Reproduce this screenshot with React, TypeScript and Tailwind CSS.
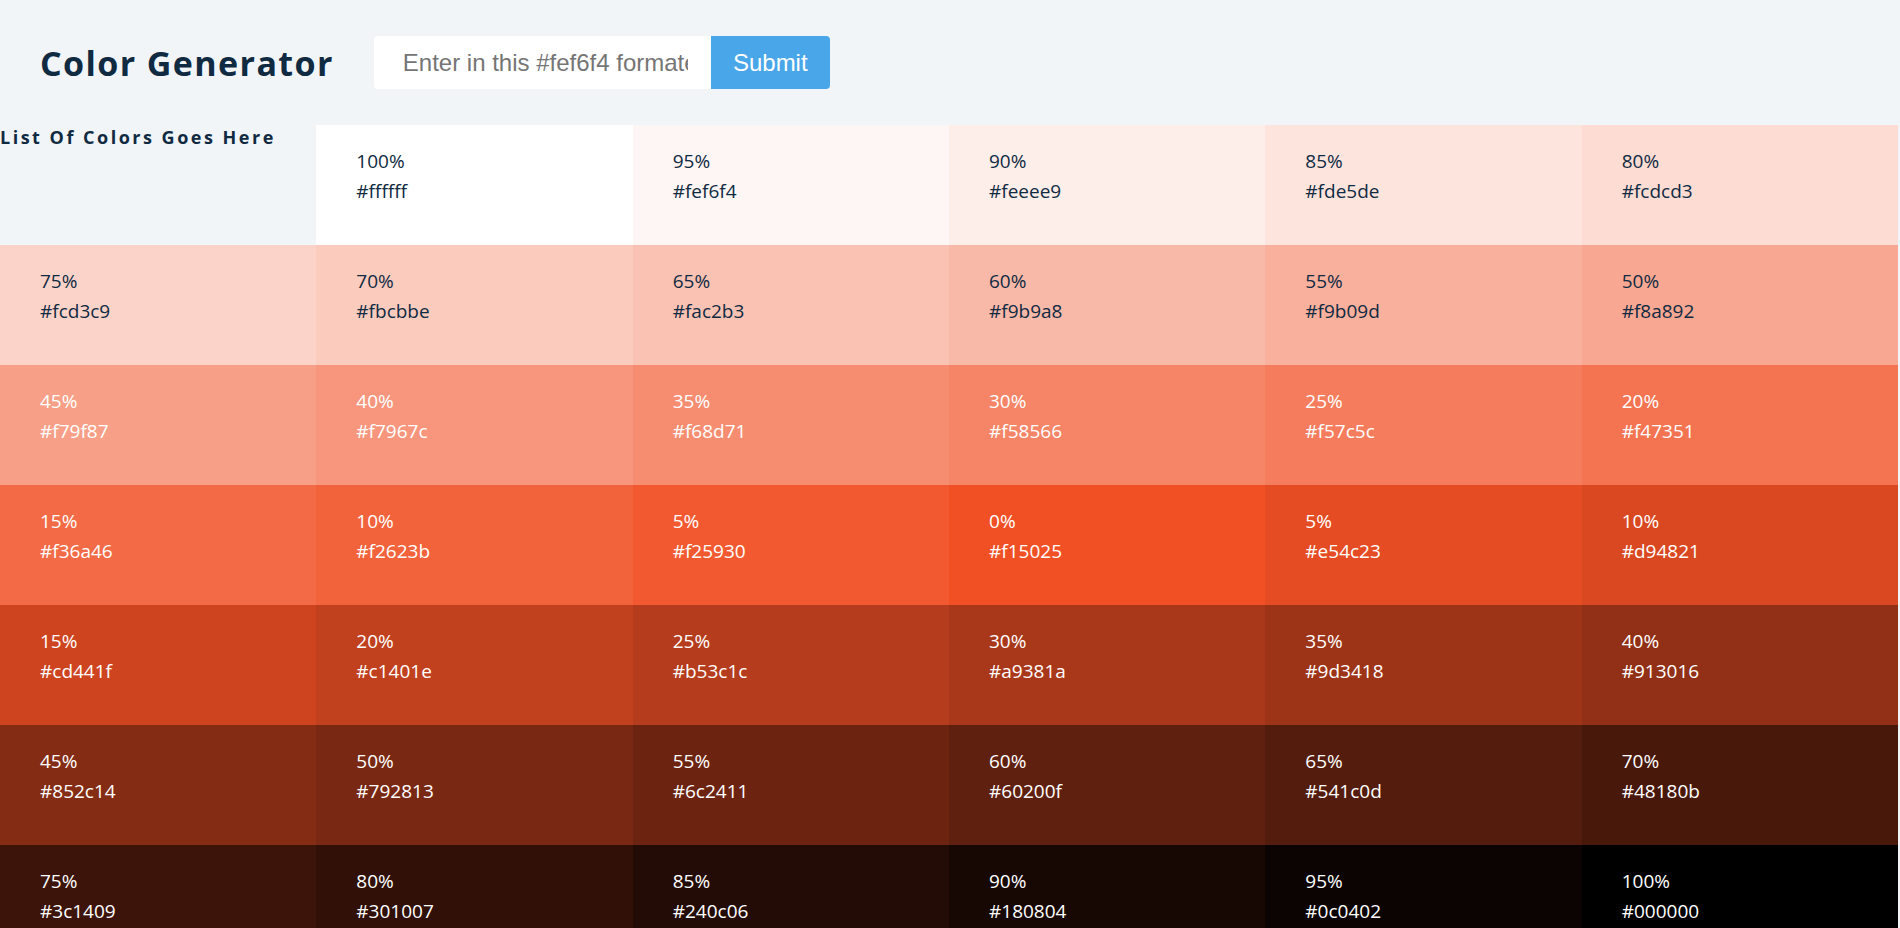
import React from 'react';

interface Swatch {
  weight: number;
  hex: string;
  light: boolean;
}

const tints = [
  'ffffff', 'fef6f4', 'feeee9', 'fde5de', 'fcdcd3', 'fcd3c9', 'fbcbbe', 'fac2b3', 'f9b9a8', 'f9b09d',
  'f8a892', 'f79f87', 'f7967c', 'f68d71', 'f58566', 'f57c5c', 'f47351', 'f36a46', 'f2623b', 'f25930',
];
const shades = [
  'e54c23', 'd94821', 'cd441f', 'c1401e', 'b53c1c', 'a9381a', '9d3418', '913016', '852c14', '792813',
  '6c2411', '60200f', '541c0d', '48180b', '3c1409', '301007', '240c06', '180804', '0c0402', '000000',
];

const swatches: Swatch[] = [
  ...tints.map((hex, i) => ({ weight: 100 - i * 5, hex, light: i <= 10 })),
  { weight: 0, hex: 'f15025', light: false },
  ...shades.map((hex, i) => ({ weight: (i + 1) * 5, hex, light: false })),
];

function ColorCell({ swatch }: { swatch: Swatch }) {
  return (
    <article
      className={
        'h-[120px] px-10 pt-[21px] text-[19px] leading-[30px] ' +
        (swatch.light ? 'text-[#102a42]' : 'text-white')
      }
      style={{ backgroundColor: `#${swatch.hex}` }}
    >
      <p>{swatch.weight}%</p>
      <p>#{swatch.hex}</p>
    </article>
  );
}

export default function App() {
  return (
    <main
      className="min-h-screen bg-[#f1f5f8] text-[#102a42]"
      style={{ fontFamily: '"Open Sans", "Noto Sans", sans-serif' }}
    >
      <section className="flex items-center gap-[40px] pl-10 pt-[36px] pb-[36px]">
        <h3 className="text-[34px] font-bold leading-none tracking-[1.4px]">Color Generator</h3>
        <form className="flex h-[53px]" onSubmit={(e) => e.preventDefault()}>
          <input
            type="text"
            placeholder="Enter in this #fef6f4 formate"
            className="h-full w-[337px] rounded-l bg-white pl-[29px] pr-[23px] text-[24px] text-[#102a42] outline-none placeholder:text-[#757575]"
            style={{ fontFamily: '"Liberation Sans", Arial, sans-serif' }}
          />
          <button
            type="submit"
            className="h-full w-[119px] rounded-r bg-[#49a6e9] text-[24px] text-white"
            style={{ fontFamily: '"Liberation Sans", Arial, sans-serif' }}
          >
            Submit
          </button>
        </form>
      </section>

      <section className="grid w-[calc(100%-2px)] grid-cols-6">
        <h4 className="text-[18px] font-bold leading-[24px] tracking-[2.5px]">List Of Colors Goes Here</h4>
        {swatches.map((s, idx) => (
          <ColorCell key={idx} swatch={s} />
        ))}
      </section>
    </main>
  );
}
